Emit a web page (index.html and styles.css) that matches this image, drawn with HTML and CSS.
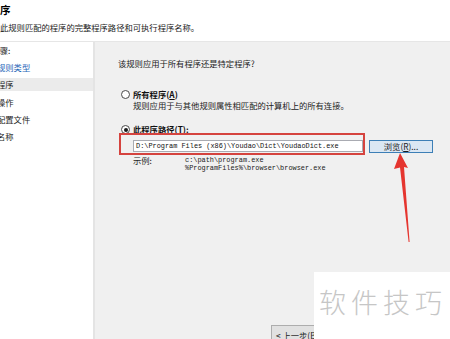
FILE: index.html
```html
<!DOCTYPE html>
<html>
<head>
    <meta charset="utf-8">
    <title>新建入站规则向导</title>
    <link rel="stylesheet" href="styles.css">
</head>
<body>
    <div class="header">
        <div class="title">程序</div>
        <div class="subtitle">指定此规则匹配的程序的完整程序路径和可执行程序名称。</div>
    </div>

    <div class="main">
        <div class="steps">
            <div class="steps-title">步骤:</div>
            <div class="step done">规则类型</div>
            <div class="step current">程序</div>
            <div class="step">操作</div>
            <div class="step">配置文件</div>
            <div class="step">名称</div>
        </div>

        <div class="content">
            <p class="question">该规则应用于所有程序还是特定程序?</p>

            <div class="option first">
                <span class="radio"></span>
                <div>
                    <div class="option-label">所有程序(<u>A</u>)</div>
                    <div class="option-desc">规则应用于与其他规则属性相匹配的计算机上的所有连接。</div>
                </div>
            </div>

            <div class="option second">
                <span class="radio checked"></span>
                <div class="option-label">此程序路径(<u>T</u>):</div>
            </div>

            <div class="path-row">
                <div class="path-input">D:\Program Files (x86)\Youdao\Dict\YoudaoDict.exe</div>
                <button class="browse">浏览(<u>R</u>)...</button>
            </div>

            <div class="example">
                <span class="example-label">示例:</span>
                <div class="example-paths">
                    <div>c:\path\program.exe</div>
                    <div>%ProgramFiles%\browser\browser.exe</div>
                </div>
            </div>

            <div class="buttons">
                <button class="nav-btn">&lt; 上一步(<u>B</u>)</button>
                <button class="nav-btn">下一步(<u>N</u>) &gt;</button>
                <button class="nav-btn">取消</button>
            </div>
        </div>
    </div>

    <!-- annotations on top of the screenshot -->
    <div class="highlight"></div>
    <svg class="arrow" width="25" height="95" viewBox="0 0 25 95">
        <polygon points="10,3 18,18 14,17 19.6,92 18.6,92 10,17.5 4,19" fill="#e5352f"/>
    </svg>

    <div class="watermark">软件技巧</div>
</body>
</html>
```

FILE: styles.css
```css
* {
    box-sizing: border-box;
}
body {
    margin: 0;
    width: 450px;
    height: 339px;
    overflow: hidden;
    position: relative;
    font-family: "Noto Sans CJK SC", "Microsoft YaHei", sans-serif;
    font-size: 8.3px;
    color: #1c1c1c;
    background: #f0f0f0;
}
u {
    text-decoration: underline;
}

/* header */
.header {
    height: 42px;
    background: #fff;
    border-bottom: 1px solid #e6e6e6;
    padding-top: 4px;
    white-space: nowrap;
}
.title {
    font-weight: bold;
    font-size: 10.5px;
    line-height: 12px;
    margin-left: -10.5px;
    color: #000;
}
.subtitle {
    margin-top: 6px;
    line-height: 10px;
    margin-left: -16.6px;
}

/* body */
.main {
    display: flex;
    height: 310px;
}
.steps {
    width: 95px;
    background: #fff;
    border-right: 2px solid #e4e4e4;
    padding-top: 2px;
    white-space: nowrap;
}
.steps-title {
    line-height: 13px;
    margin-left: -8.5px;
}
.step {
    line-height: 13px;
    margin-top: 4.2px;
    text-indent: -3px;
}
.step.done {
    color: #1f66b8;
}
.step.current {
    background: #ebebeb;
}

.content {
    flex: 1;
    display: flex;
    flex-direction: column;
    padding: 15px 0 7px 23px;
    white-space: nowrap;
}
.question {
    margin: 0;
    line-height: 12px;
}
.option {
    display: flex;
    align-items: flex-start;
    margin-left: 3px;
}
.option.first {
    margin-top: 20px;
}
.option.second {
    margin-top: 13px;
}
.radio {
    width: 9px;
    height: 9px;
    margin-top: 1px;
    margin-right: 3px;
    border: 1px solid #4a4a4a;
    border-radius: 50%;
    background: #fff;
    display: flex;
    align-items: center;
    justify-content: center;
    flex-shrink: 0;
}
.radio.checked::after {
    content: "";
    width: 4px;
    height: 4px;
    border-radius: 50%;
    background: #1a1a1a;
}
.option-label {
    font-weight: bold;
    line-height: 11px;
    color: #111;
}
.option-desc {
    line-height: 11px;
}

.path-row {
    display: flex;
    align-items: flex-start;
    margin-top: 5px;
    margin-left: 15px;
}
.path-input {
    width: 230px;
    height: 12px;
    background: #fff;
    border: 1px solid #a9abb2;
    padding-left: 2px;
    font-family: "Liberation Mono", monospace;
    font-size: 6.9px;
    line-height: 10px;
    color: #111;
}
.browse {
    margin-left: 6px;
    width: 64px;
    height: 13px;
    padding: 0;
    background: #dbe7f3;
    border: 1px solid #3d7fb6;
    font-family: inherit;
    font-size: 8.3px;
    line-height: 11px;
    color: #1c1c1c;
}

.example {
    display: flex;
    margin-top: 3px;
    margin-left: 15px;
    line-height: 8px;
}
.example-label {
    width: 52px;
}
.example-paths {
    font-family: "Liberation Mono", monospace;
    font-size: 6.9px;
    line-height: 8px;
}

.buttons {
    margin-top: auto;
    display: flex;
    gap: 8px;
    padding-left: 153px;
}
.nav-btn {
    height: 20px;
    padding: 0 10px 0 4px;
    background: #e1e1e1;
    border: 1px solid #adadad;
    font-family: inherit;
    font-size: 8.3px;
    color: #1c1c1c;
    text-align: left;
}

/* red annotation */
.highlight {
    position: absolute;
    left: 119px;
    top: 133px;
    width: 246px;
    height: 22px;
    border: 2px solid #d5433e;
}
.arrow {
    position: absolute;
    left: 390px;
    top: 150px;
}

/* watermark */
.watermark {
    position: absolute;
    left: 314px;
    top: 272px;
    right: 0;
    bottom: 0;
    background: #fff;
    padding: 16px 0 0 5px;
    font-size: 27px;
    line-height: 27px;
    letter-spacing: 5px;
    font-weight: 300;
    color: #c6c6c6;
    white-space: nowrap;
}
```
